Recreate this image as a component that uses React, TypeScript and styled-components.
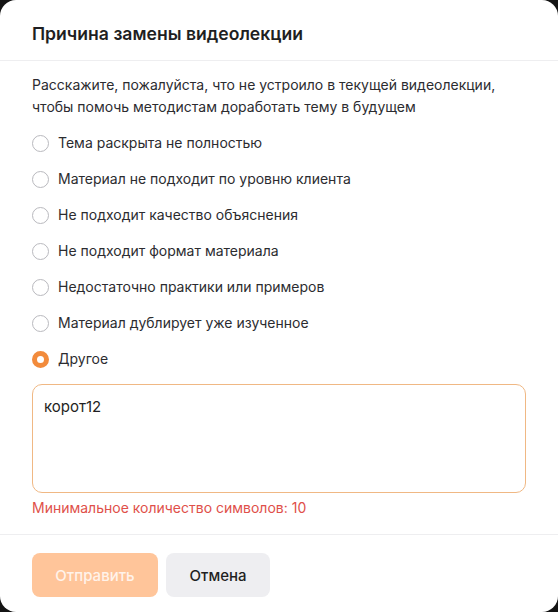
import { useState } from 'react';
import styled, { createGlobalStyle } from 'styled-components';

const GlobalStyle = createGlobalStyle`
  html, body {
    margin: 0;
    padding: 0;
    background: #141414;
  }
  * {
    box-sizing: border-box;
  }
`;

const Modal = styled.div`
  width: 558px;
  height: 612px;
  background: #ffffff;
  border-radius: 16px;
  display: flex;
  flex-direction: column;
  font-family: Inter, 'Noto Sans', sans-serif;
  color: #1f1f22;
  overflow: hidden;
`;

const Header = styled.div`
  padding: 22px 32px 14px;
  border-bottom: 1px solid #eeeef0;
`;

const Title = styled.h2`
  margin: 0;
  font-size: 17.6px;
  line-height: 24px;
  font-weight: 600;
  color: #1f1f22;
`;

const Body = styled.div`
  flex: 1;
  padding: 13px 32px 16px;
  display: flex;
  flex-direction: column;
  border-bottom: 1px solid #eeeef0;
`;

const Description = styled.p`
  margin: 0 0 15px;
  font-size: 14px;
  line-height: 22px;
  color: #2c2c30;
`;

const Options = styled.div`
  display: flex;
  flex-direction: column;
  gap: 16px;
`;

const OptionRow = styled.label`
  display: flex;
  align-items: center;
  gap: 9px;
  height: 20px;
  font-size: 14px;
  line-height: 20px;
  color: #2c2c30;
  cursor: pointer;
`;

const Radio = styled.span<{ checked: boolean }>`
  width: 17px;
  height: 17px;
  border-radius: 50%;
  flex-shrink: 0;
  background: #fff;
  border: ${({ checked }) =>
    checked ? '5px solid #f28b3c' : '1px solid #b9b9be'};
`;

const TextArea = styled.textarea`
  margin-top: 15px;
  height: 109px;
  width: 100%;
  resize: none;
  border: 1px solid #f0b884;
  border-radius: 10px;
  padding: 12px 11px;
  font-family: Inter, 'Noto Sans', sans-serif;
  font-size: 15px;
  line-height: 20px;
  color: #1f1f22;
  outline: none;
`;

const ErrorText = styled.div`
  margin-top: 5px;
  font-size: 14px;
  line-height: 20px;
  color: #e0504a;
`;

const Footer = styled.div`
  padding: 18px 32px 16px;
  display: flex;
  gap: 8px;
`;

const Button = styled.button<{ variant: 'primary' | 'secondary' }>`
  height: 44px;
  width: ${({ variant }) => (variant === 'primary' ? '126px' : '104px')};
  border: none;
  border-radius: 8px;
  padding: 0;
  font-family: Inter, 'Noto Sans', sans-serif;
  font-size: 15px;
  font-weight: 500;
  background: ${({ variant }) =>
    variant === 'primary' ? '#ffc59a' : '#eeeef1'};
  color: ${({ variant }) => (variant === 'primary' ? '#fff3ea' : '#1f1f22')};
`;

const reasons = [
  'Тема раскрыта не полностью',
  'Материал не подходит по уровню клиента',
  'Не подходит качество объяснения',
  'Не подходит формат материала',
  'Недостаточно практики или примеров',
  'Материал дублирует уже изученное',
  'Другое',
];

const App = () => {
  const [selected, setSelected] = useState('Другое');
  const [text, setText] = useState('корот12');

  return (
    <>
      <GlobalStyle />
      <Modal>
        <Header>
          <Title>Причина замены видеолекции</Title>
        </Header>
        <Body>
          <Description>
            Расскажите, пожалуйста, что не устроило в текущей видеолекции,
            <br />
            чтобы помочь методистам доработать тему в будущем
          </Description>
          <Options>
            {reasons.map((reason) => (
              <OptionRow key={reason} onClick={() => setSelected(reason)}>
                <Radio checked={selected === reason} />
                {reason}
              </OptionRow>
            ))}
          </Options>
          <TextArea value={text} onChange={(e) => setText(e.target.value)} />
          <ErrorText>Минимальное количество символов: 10</ErrorText>
        </Body>
        <Footer>
          <Button variant="primary" disabled>
            Отправить
          </Button>
          <Button variant="secondary">Отмена</Button>
        </Footer>
      </Modal>
    </>
  );
};

export default App;
